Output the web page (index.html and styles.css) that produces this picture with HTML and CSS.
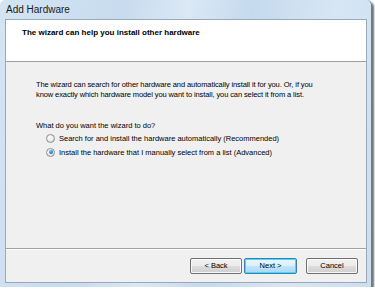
FILE: index.html
```html
<!DOCTYPE html>
<html lang="en">
<head>
  <meta charset="UTF-8">
  <title>Add Hardware</title>
  <link rel="stylesheet" href="styles.css">
</head>
<body>

  <!-- Dialog window -->
  <div class="window">
    <div class="titlebar">Add Hardware</div>

    <div class="client">
      <div class="header">
        <h2>The wizard can help you install other hardware</h2>
      </div>

      <div class="content">
        <p class="intro">The wizard can search for other hardware and automatically install it for you. Or, if you know exactly which hardware model you want to install, you can select it from a list.</p>

        <p class="question">What do you want the wizard to do?</p>

        <label class="option">
          <span class="radio"></span>
          Search for and install the hardware automatically (Recommended)
        </label>
        <label class="option">
          <span class="radio checked"></span>
          Install the hardware that I manually select from a list (Advanced)
        </label>
      </div>

      <div class="footer">
        <button class="btn">&lt; Back</button>
        <button class="btn default">Next &gt;</button>
        <button class="btn cancel">Cancel</button>
      </div>
    </div>
  </div>

</body>
</html>
```

FILE: styles.css
```css
body {
  margin: 0;
  padding: 0;
  background: #ffffff;
  font-family: "Liberation Sans", Arial, sans-serif;
  overflow: hidden;
}

.window {
  width: 371px;
  height: 287px;
  display: flex;
  flex-direction: column;
  background: linear-gradient(100deg, #d3e4f3 0%, #c8dcef 30%, #dbe8f5 45%, #c5daee 60%, #d7e6f4 80%, #cbdef0 100%);
  border-right: 1px solid #3f86c2;
  border-radius: 5px 5px 0 0;
  box-shadow: 2px 2px 2px rgba(0, 0, 0, 0.55);
}

.titlebar {
  height: 19px;
  line-height: 19px;
  padding-left: 6px;
  font-size: 10px;
  color: #1a1a1a;
}

.client {
  flex: 1;
  margin: 0 4px 4px 5px;
  display: flex;
  flex-direction: column;
  background: #f0f0f0;
  border: 1px solid #9aa9b8;
}

.header {
  height: 42px;
  background: #ffffff;
  border-bottom: 1px solid #a0a0a0;
  box-sizing: border-box;
}

.header h2 {
  margin: 8px 0 0 16px;
  font-size: 8px;
  font-weight: bold;
  color: #000000;
}

.content {
  flex: 1;
  padding: 18px 30px 0 30px;
  font-size: 7.5px;
  color: #000000;
}

.intro {
  margin: 0 12px 0 0;
  letter-spacing: -0.1px;
  line-height: 9.5px;
}

.question {
  margin: 22px 0 1px 0;
}

.option {
  display: flex;
  align-items: center;
  gap: 4px;
  height: 14px;
  margin-left: 10px;
}

.radio {
  width: 7px;
  height: 7px;
  border-radius: 50%;
  border: 1px solid #8f8f8f;
  background: radial-gradient(circle at 40% 35%, #ffffff 0%, #e6e6e6 60%, #c8c8c8 100%);
  position: relative;
}

.radio.checked::after {
  content: "";
  position: absolute;
  left: 1.5px;
  top: 1.5px;
  width: 4px;
  height: 4px;
  border-radius: 50%;
  background: radial-gradient(circle at 40% 35%, #6fc1f2 0%, #1f6fb8 70%, #18508c 100%);
}

.footer {
  height: 34px;
  border-top: 1px solid #a0a0a0;
  box-shadow: inset 0 1px 0 #ffffff;
  display: flex;
  justify-content: flex-end;
  align-items: center;
  padding-right: 8px;
  box-sizing: border-box;
}

.btn {
  width: 52px;
  height: 16px;
  padding: 0;
  font-family: "Liberation Sans", Arial, sans-serif;
  font-size: 7.5px;
  color: #000000;
  border: 1px solid #707070;
  border-radius: 2px;
  background: linear-gradient(#f2f2f2 0%, #ebebeb 50%, #dddddd 51%, #cfcfcf 100%);
  box-shadow: inset 0 0 0 1px rgba(255, 255, 255, 0.8);
  margin-left: 2px;
}

.btn.default {
  width: 53px;
  border-color: #3c7fb1;
  background: linear-gradient(#eaf6fd 0%, #d9f0fc 50%, #bee6fd 51%, #a7d9f5 100%);
  box-shadow: inset 0 0 0 1px #48d8f7;
}

.btn.cancel {
  margin-left: 9px;
}
```
